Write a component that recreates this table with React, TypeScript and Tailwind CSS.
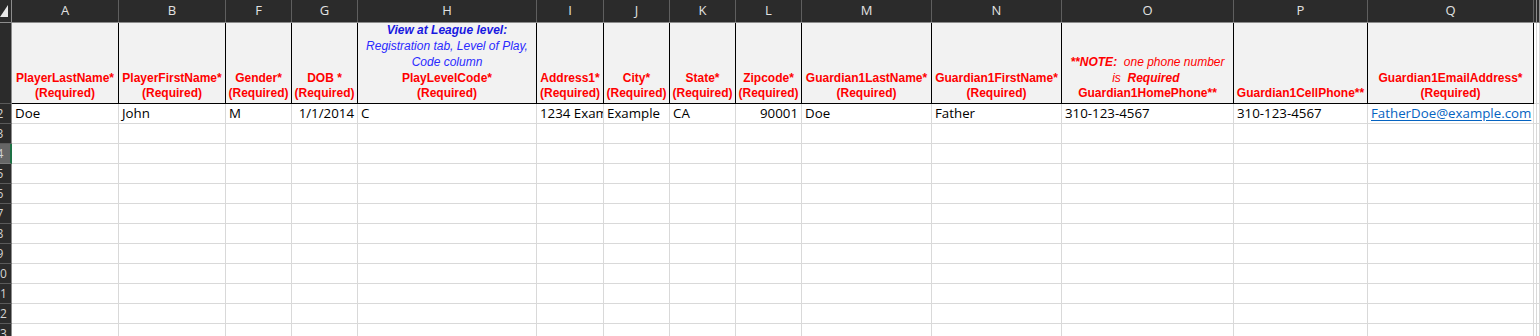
import type { ReactNode } from "react"

type Col = {
  key: string
  w: string
  head: ReactNode
  value?: ReactNode
  right?: boolean
}

const Req = () => <span>(Required)</span>

const cols: Col[] = [
  { key: "A", w: "w-[107px]", head: <><span>PlayerLastName*</span><Req /></>, value: "Doe" },
  { key: "B", w: "w-[107px]", head: <><span>PlayerFirstName*</span><Req /></>, value: "John" },
  { key: "F", w: "w-[66px]", head: <><span>Gender*</span><Req /></>, value: "M" },
  { key: "G", w: "w-[66px]", head: <><span>DOB *</span><Req /></>, value: "1/1/2014", right: true },
  {
    key: "H",
    w: "w-[179px]",
    head: (
      <>
        <span className="italic text-[#1818e0]">View at League level:</span>
        <span className="italic font-normal text-[#2a2aff]">Registration tab, Level of Play,</span>
        <span className="italic font-normal text-[#2a2aff]">Code column</span>
        <span>PlayLevelCode*</span>
        <Req />
      </>
    ),
    value: "C",
  },
  { key: "I", w: "w-[67px]", head: <><span>Address1*</span><Req /></>, value: "1234 Exam" },
  { key: "J", w: "w-[66px]", head: <><span>City*</span><Req /></>, value: "Example" },
  { key: "K", w: "w-[66px]", head: <><span>State*</span><Req /></>, value: "CA" },
  { key: "L", w: "w-[66px]", head: <><span>Zipcode*</span><Req /></>, value: "90001", right: true },
  { key: "M", w: "w-[130px]", head: <><span>Guardian1LastName*</span><Req /></>, value: "Doe" },
  { key: "N", w: "w-[130px]", head: <><span>Guardian1FirstName*</span><Req /></>, value: "Father" },
  {
    key: "O",
    w: "w-[172px]",
    head: (
      <>
        <span className="italic font-normal">
          <b>**NOTE:</b>&nbsp; one phone number
        </span>
        <span className="italic font-normal">
          is&nbsp; <b>Required</b>&nbsp;
        </span>
        <span>Guardian1HomePhone**</span>
      </>
    ),
    value: "310-123-4567",
  },
  { key: "P", w: "w-[134px]", head: <span>Guardian1CellPhone**</span>, value: "310-123-4567" },
  {
    key: "Q",
    w: "w-[166px]",
    head: <><span>Guardian1EmailAddress*</span><Req /></>,
    value: <span className="text-[#0563c1] underline underline-offset-2">FatherDoe@example.com</span>,
  },
]

const emptyRows = [3, 4, 5, 6, 7, 8, 9, 10, 11, 12, 13]

// row numbers sit centred in a header that is mostly cropped off on the left
function RowNum({ n, selected }: { n?: number; selected?: boolean }) {
  return (
    <div
      className={
        selected
          ? "w-[12px] shrink-0 overflow-hidden bg-[#666666] border-r-2 border-[#1e7145] border-b border-b-[#7a7a7a] flex items-center"
          : "w-[12px] shrink-0 overflow-hidden bg-[#2b2b2b] border-r border-[#8c8c8c] border-b border-b-[#5a5a5a] flex items-center"
      }
    >
      <div className="w-[22px] -ml-[11px] shrink-0 text-center text-[12px] text-[#d4d4d4] font-['Open_Sans',sans-serif]">
        {n}
      </div>
    </div>
  )
}

function Tail({ className }: { className: string }) {
  return (
    <>
      <div className={"w-[3px] shrink-0 " + className} />
      <div className={"flex-1 " + className} />
    </>
  )
}

export default function App() {
  return (
    <div className="h-[336px] w-[1540px] overflow-hidden bg-white select-none">
      {/* column letters */}
      <div className="flex h-[23px] bg-[#2b2b2b] border-b border-[#8c8c8c]">
        <div className="w-[12px] shrink-0 border-r border-[#8c8c8c] flex items-end pb-[4px]">
          <svg width="9" height="14" viewBox="0 0 9 14" className="block">
            <polygon points="0,13 8,13 8,1" fill="#e8e8e8" />
          </svg>
        </div>
        {cols.map((c) => (
          <div
            key={c.key}
            className={c.w + " shrink-0 border-r border-[#5f5f5f] flex items-center justify-center text-[13px] text-[#e2e2e2] font-['Open_Sans',sans-serif]"}
          >
            {c.key}
          </div>
        ))}
        <Tail className="border-r border-[#8c8c8c]" />
      </div>

      {/* row 1: field headings */}
      <div className="flex h-[81px]">
        <div className="w-[12px] shrink-0 bg-[#2b2b2b] border-r border-[#8c8c8c] border-b border-b-[#5a5a5a]" />
        {cols.map((c) => (
          <div
            key={c.key}
            className={
              c.w +
              " shrink-0 bg-[#f2f2f2] border-r border-b border-black flex flex-col items-center justify-end pb-[1px] text-center whitespace-nowrap overflow-hidden text-[12px] leading-[15.75px] font-bold text-[#ff0000] font-['Liberation_Sans',Arial,sans-serif]"
            }
          >
            {c.head}
          </div>
        ))}
        <Tail className="border-r border-b border-[#d9d9d9]" />
      </div>

      {/* row 2: sample data */}
      <div className="flex h-[20px]">
        <RowNum n={2} />
        {cols.map((c) => (
          <div
            key={c.key}
            className={
              c.w +
              " shrink-0 border-r border-b border-[#d9d9d9] overflow-hidden whitespace-nowrap flex items-center pt-[1px] text-[13.3px] text-black font-['Open_Sans',sans-serif] " +
              (c.right ? "justify-end pr-[3px]" : "pl-[3px]")
            }
          >
            {c.value}
          </div>
        ))}
        <Tail className="border-r border-b border-[#d9d9d9]" />
      </div>

      {emptyRows.map((n) => (
        <div key={n} className="flex h-[20px]">
          <RowNum n={n} selected={n === 4} />
          {cols.map((c) => (
            <div key={c.key} className={c.w + " shrink-0 border-r border-b border-[#d9d9d9]"} />
          ))}
          <Tail className="border-r border-b border-[#d9d9d9]" />
        </div>
      ))}
    </div>
  )
}
